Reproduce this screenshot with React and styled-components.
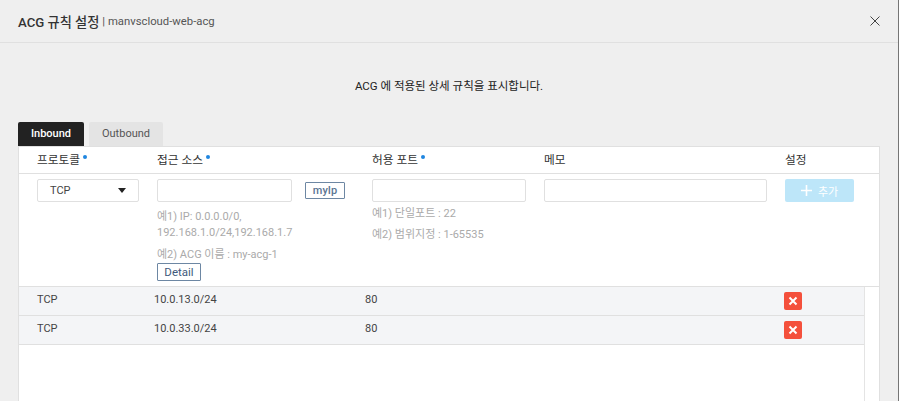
import React from 'react'
import styled, {createGlobalStyle} from 'styled-components'

const FONT = `Roboto, "Noto Sans CJK KR", sans-serif`

const GlobalStyle = createGlobalStyle`
  html, body {
    margin: 0;
    height: 401px;
    overflow: hidden;
    background: #757575;
  }
  * {
    box-sizing: border-box;
  }
`

const RULES = [
  {id: 1, protocol: 'TCP', source: '10.0.13.0/24', port: '80'},
  {id: 2, protocol: 'TCP', source: '10.0.33.0/24', port: '80'},
]

const App = () =>
  <Modal>
    <GlobalStyle />
    <Header>
      <Title>ACG 규칙 설정</Title>
      <SubTitle>| manvscloud-web-acg</SubTitle>
      <CloseIcon viewBox="0 0 10 10">
        <path d="M0.5 0.5 L9.5 9.5 M9.5 0.5 L0.5 9.5" />
      </CloseIcon>
    </Header>
    <Body>
      <Intro>ACG 에 적용된 상세 규칙을 표시합니다.</Intro>
      <Tabs>
        <Tab active>Inbound</Tab>
        <Tab>Outbound</Tab>
      </Tabs>
      <Panel>
        <HeadRow>
          <HeadCell width="138px" pad="18px">프로토콜<Dot /></HeadCell>
          <HeadCell width="215px">접근 소스<Dot /></HeadCell>
          <HeadCell width="172px">허용 포트<Dot /></HeadCell>
          <HeadCell width="241px">메모</HeadCell>
          <HeadCell>설정</HeadCell>
        </HeadRow>
        <FormRow>
          <SelectBox>
            TCP
            <Caret />
          </SelectBox>
          <SourceCol>
            <SourceInputRow>
              <TextInput width="135px" />
              <OutlineButton>myIp</OutlineButton>
            </SourceInputRow>
            <Hint first>예1) IP: 0.0.0.0/0,<br />192.168.1.0/24,192.168.1.7</Hint>
            <Hint>예2) ACG 이름 : my-acg-1</Hint>
            <DetailButton>Detail</DetailButton>
          </SourceCol>
          <PortCol>
            <TextInput width="154px" />
            <PortHint first>예1) 단일포트 : 22</PortHint>
            <PortHint>예2) 범위지정 : 1-65535</PortHint>
          </PortCol>
          <TextInput width="223px" />
          <AddButton>
            <AddIcon viewBox="0 0 11 11">
              <path d="M5.5 0 V11 M0 5.5 H11" />
            </AddIcon>
            추가
          </AddButton>
        </FormRow>
        <ListArea>
          <List>
            {RULES.map(rule =>
              <Row key={rule.id}>
                <ProtocolText>{rule.protocol}</ProtocolText>
                <SourceText>{rule.source}</SourceText>
                <PortText>{rule.port}</PortText>
                <DeleteButton>
                  <svg width="10" height="10" viewBox="0 0 10 10">
                    <path d="M1.5 1.5 L8.5 8.5 M8.5 1.5 L1.5 8.5" stroke="#fff" strokeWidth="2" />
                  </svg>
                </DeleteButton>
              </Row>
            )}
          </List>
          <ScrollTrack />
        </ListArea>
      </Panel>
    </Body>
  </Modal>

const Modal = styled.div`
  display: flex;
  flex-direction: column;
  width: 898px;
  height: 401px;
  background: #efefef;
  font-family: ${FONT};
  color: #222;
  overflow: hidden;
`

const Header = styled.div`
  display: flex;
  align-items: center;
  flex: none;
  height: 43px;
  padding: 0 18px;
  border-bottom: 1px solid #e0e0e0;
`

const Title = styled.span`
  font-size: 13.2px;
  font-weight: 500;
  color: #333;
`

const SubTitle = styled.span`
  margin-left: 3px;
  font-size: 11.3px;
  color: #555;
`

const CloseIcon = styled.svg`
  width: 10px;
  height: 10px;
  margin-left: auto;
  fill: none;
  stroke: #444;
  stroke-width: 1;
`

const Body = styled.div`
  display: flex;
  flex-direction: column;
  flex: 1;
  min-height: 0;
  padding: 0 18px;
`

const Intro = styled.div`
  flex: none;
  height: 79px;
  padding-top: 36px;
  text-align: center;
  font-size: 11.5px;
  line-height: 14px;
  color: #222;
`

const Tabs = styled.div`
  display: flex;
  flex: none;
  gap: 5px;
  height: 24px;
`

const Tab = styled.div`
  display: flex;
  align-items: center;
  justify-content: center;
  width: ${p => p.active ? '66px' : '74px'};
  padding-bottom: 2px;
  border-radius: 2px 2px 0 0;
  background: ${p => p.active ? '#222222' : '#e4e4e4'};
  color: ${p => p.active ? '#fff' : '#555'};
  font-size: 11px;
  font-weight: ${p => p.active ? 500 : 400};
`

const Panel = styled.div`
  display: flex;
  flex-direction: column;
  flex: 1;
  min-height: 0;
  width: 862px;
  background: #fff;
  border: 1px solid #e0e0e0;
  border-bottom: none;
`

const HeadRow = styled.div`
  display: flex;
  align-items: center;
  flex: none;
  height: 27px;
  padding-bottom: 3px;
  border-bottom: 1px solid #e0e0e0;
`

const HeadCell = styled.div`
  flex: ${p => p.width ? `0 0 ${p.width}` : '1'};
  padding-left: ${p => p.pad || 0};
  font-size: 11.7px;
  color: #333;
`

const Dot = styled.span`
  display: inline-block;
  width: 4px;
  height: 4px;
  margin-left: 3px;
  border-radius: 50%;
  background: #1f86e0;
  vertical-align: 5px;
`

const FormRow = styled.div`
  display: flex;
  align-items: flex-start;
  flex: none;
  height: 112px;
  padding: 5px 0 0 18px;
`

const SelectBox = styled.div`
  display: flex;
  align-items: center;
  justify-content: space-between;
  flex: none;
  width: 102px;
  height: 23px;
  margin-right: 18px;
  padding: 0 12px;
  border: 1px solid #e0e0e0;
  border-radius: 2px;
  font-size: 11px;
  color: #444;
`

const Caret = styled.span`
  width: 0;
  height: 0;
  border-left: 4px solid transparent;
  border-right: 4px solid transparent;
  border-top: 5px solid #222;
`

const TextInput = styled.div`
  flex: none;
  width: ${p => p.width};
  height: 23px;
  border: 1px solid #e0e0e0;
  border-radius: 2px;
  background: #fff;
`

const SourceCol = styled.div`
  flex: 0 0 215px;
`

const SourceInputRow = styled.div`
  display: flex;
  align-items: center;
  gap: 13px;
`

const OutlineButton = styled.div`
  display: flex;
  align-items: center;
  justify-content: center;
  width: 40px;
  height: 17px;
  border: 1px solid #6d87a3;
  border-radius: 1px;
  font-size: 11px;
  font-weight: 500;
  color: #5b7492;
`

const Hint = styled.div`
  margin-top: ${p => p.first ? '7px' : '6px'};
  font-size: 11px;
  line-height: 16px;
  color: #aaa;
`

const DetailButton = styled.div`
  display: flex;
  align-items: center;
  justify-content: center;
  width: 44px;
  height: 18px;
  border: 1px solid #6d87a3;
  border-radius: 1px;
  font-size: 11.5px;
  color: #3f5a7c;
`

const PortCol = styled.div`
  flex: 0 0 172px;
`

const PortHint = styled(Hint)`
  margin-top: ${p => p.first ? '1px' : 0};
  line-height: 21px;
`

const AddButton = styled.div`
  display: flex;
  align-items: center;
  justify-content: center;
  gap: 6px;
  flex: none;
  width: 69px;
  height: 23px;
  margin-left: 18px;
  border-radius: 2px;
  background: #bde6f9;
  color: #fff;
  font-size: 11px;
`

const AddIcon = styled.svg`
  width: 11px;
  height: 11px;
  fill: none;
  stroke: #fff;
  stroke-width: 1.6;
`

const ListArea = styled.div`
  display: flex;
  flex: 1;
  min-height: 0;
  border-top: 1px solid #e0e0e0;
`

const List = styled.div`
  flex: 0 0 846px;
  border-right: 1px solid #e4e4e4;
`

const Row = styled.div`
  display: flex;
  align-items: center;
  height: 29px;
  padding-left: 18px;
  padding-bottom: 3px;
  background: #f4f5f7;
  border-bottom: 1px solid #e0e0e0;
  font-size: 11px;
  color: #444;
`

const ProtocolText = styled.span`
  flex: 0 0 117px;
`

const SourceText = styled.span`
  flex: 0 0 211px;
`

const PortText = styled.span`
  flex: 0 0 419px;
`

const DeleteButton = styled.div`
  display: flex;
  align-items: center;
  justify-content: center;
  width: 18px;
  height: 18px;
  margin-top: 3px;
  border-radius: 2px;
  background: #f4503c;
`

const ScrollTrack = styled.div`
  flex: 1;
  background: #fff;
`

export default App
